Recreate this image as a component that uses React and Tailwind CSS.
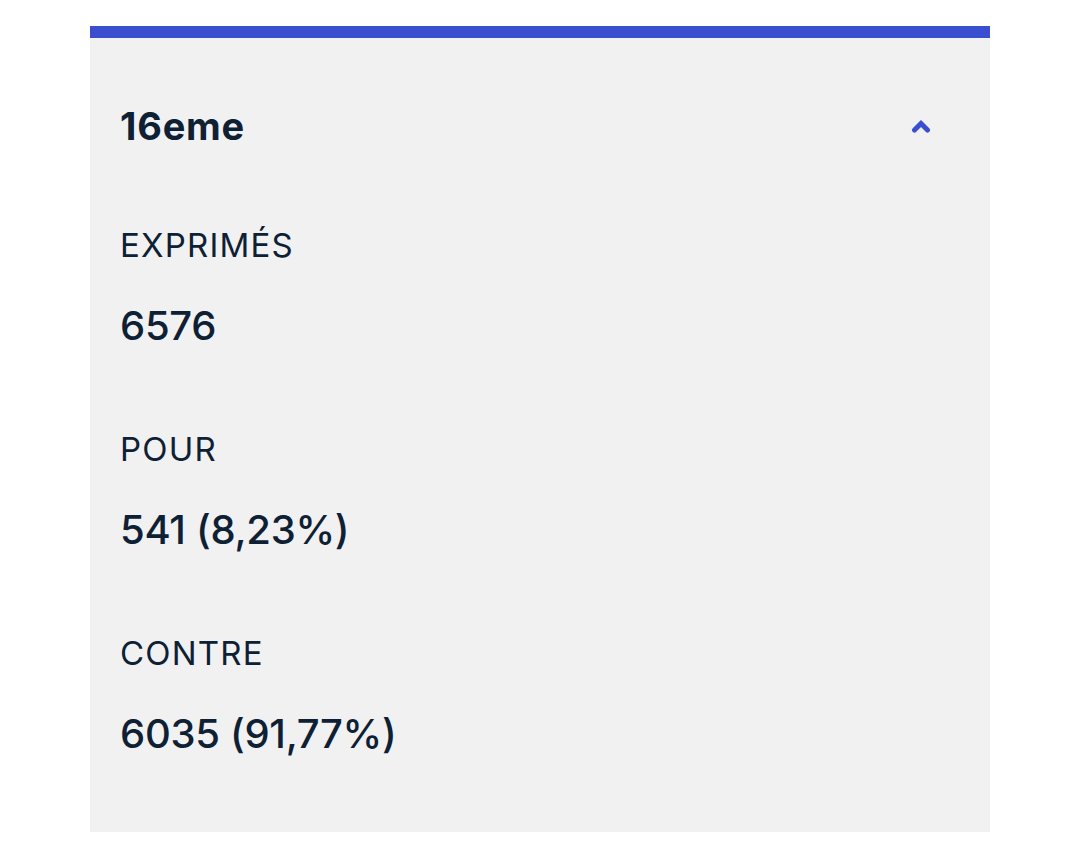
import React from 'react';

const rows = [
    { label: 'EXPRIMÉS', value: '6576' },
    { label: 'POUR', value: '541 (8,23%)' },
    { label: 'CONTRE', value: '6035 (91,77%)' },
];

function ChevronUp() {
    return (
        <svg width="20" height="14" viewBox="0 0 20 14" className="text-[#3a4fd0]">
            <path d="M3.5 11 L10 4.5 L16.5 11" fill="none" stroke="currentColor" strokeWidth="5" strokeLinejoin="miter" strokeLinecap="round" />
        </svg>
    );
}

export default function App() {
    return (
        <div className="min-h-[842px] bg-white pt-[26px] pl-[90px] font-['Inter',sans-serif] text-[#0d2034]">
            <div className="w-[900px] h-[806px] border-t-[12px] border-[#3a4fd0] bg-[#f1f1f2] px-[30px] pt-[68px]">
                {/* header */}
                <div className="flex items-center justify-between pr-[29px]">
                    <h2 className="text-[38px] leading-[40px] font-bold tracking-[0.8px]">16eme</h2>
                    <ChevronUp />
                </div>

                {/* results */}
                <div className="flex flex-col gap-[83px] mt-[81px]">
                    {rows.map((row) => (
                        <div key={row.label} className="flex flex-col gap-[41px]">
                            <span className="text-[33px] leading-[36px] font-normal tracking-[1.2px]">{row.label}</span>
                            <span className="text-[40px] leading-[44px] font-medium tracking-[-0.3px]">{row.value}</span>
                        </div>
                    ))}
                </div>
            </div>
        </div>
    );
}
